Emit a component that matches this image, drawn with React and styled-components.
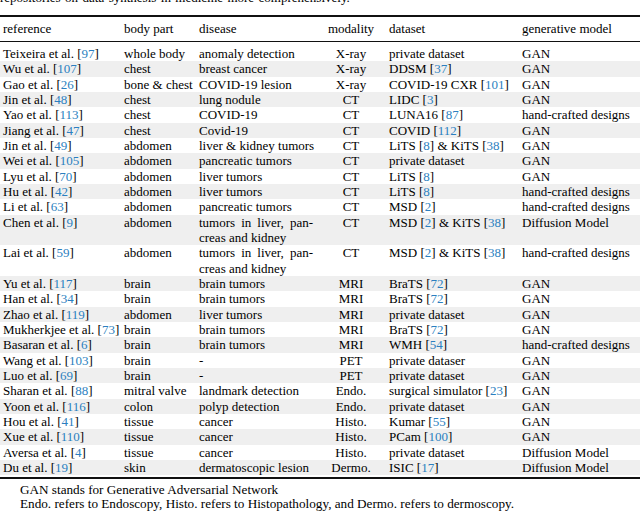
import React from "react";
import styled, { createGlobalStyle } from "styled-components";

const Global = createGlobalStyle`
  html, body { margin: 0; padding: 0; background: #fff; }
  body { font-family: "Liberation Serif", "Times New Roman", serif; color: #000; }
  #root { width: 640px; height: 514px; overflow: hidden; }
`;

const Page = styled.div`
  width: 640px;
  height: 514px;
  overflow: hidden;
  font-size: 13px;
`;

const Caption = styled.div`
  margin-top: -10px;
  height: 15px;
  line-height: 15px;
  word-spacing: 1.2px;
  white-space: nowrap;
`;

const Table = styled.div`
  margin-top: 10px;
  border-top: 2px solid #111;
  border-bottom: 2px solid #111;
  padding-bottom: 2px;
`;

const cols = "121px 75px 120px 70px 133px 1fr";

const Head = styled.div`
  display: grid;
  grid-template-columns: ${cols};
  height: 24px;
  line-height: 24px;
  border-bottom: 1px solid #111;
  margin-bottom: 4px;
`;

const Row = styled.div`
  display: grid;
  grid-template-columns: ${cols};
  line-height: 15.33px;
  background: ${(p) => (p.$shaded ? "#efefef" : "#fff")};
`;

const Cell = styled.div`
  padding: 0 3px;
  white-space: nowrap;
  text-align: ${(p) => (p.$center ? "center" : "left")};
`;

const Para = styled.div`
  white-space: normal;
`;

const JustLine = styled.div`
  text-align: justify;
  text-align-last: ${(p) => (p.$last ? "left" : "justify")};
`;

const Num = styled.span`
  color: #2b7fc0;
`;

const Notes = styled.div`
  margin-top: 4px;
  padding-left: 20px;
  font-size: 13.2px;
  line-height: 14px;
`;

function Cited({ text }) {
  const parts = text.split(/\[(\d+)\]/);
  return (
    <>
      {parts.map((p, i) =>
        i % 2 === 1 ? (
          <React.Fragment key={i}>
            [<Num>{p}</Num>]
          </React.Fragment>
        ) : (
          <React.Fragment key={i}>{p}</React.Fragment>
        )
      )}
    </>
  );
}

const multi = ["tumors in liver, pan-", "creas and kidney"];

const rows = [
  ["Teixeira et al. [97]", "whole body", "anomaly detection", "X-ray", "private dataset", "GAN"],
  ["Wu et al. [107]", "chest", "breast cancer", "X-ray", "DDSM [37]", "GAN"],
  ["Gao et al. [26]", "bone & chest", "COVID-19 lesion", "X-ray", "COVID-19 CXR [101]", "GAN"],
  ["Jin et al. [48]", "chest", "lung nodule", "CT", "LIDC [3]", "GAN"],
  ["Yao et al. [113]", "chest", "COVID-19", "CT", "LUNA16 [87]", "hand-crafted designs"],
  ["Jiang et al. [47]", "chest", "Covid-19", "CT", "COVID [112]", "GAN"],
  ["Jin et al. [49]", "abdomen", "liver & kidney tumors", "CT", "LiTS [8] & KiTS [38]", "GAN"],
  ["Wei et al. [105]", "abdomen", "pancreatic tumors", "CT", "private dataset", "GAN"],
  ["Lyu et al. [70]", "abdomen", "liver tumors", "CT", "LiTS [8]", "GAN"],
  ["Hu et al. [42]", "abdomen", "liver tumors", "CT", "LiTS [8]", "hand-crafted designs"],
  ["Li et al. [63]", "abdomen", "pancreatic tumors", "CT", "MSD [2]", "hand-crafted designs"],
  ["Chen et al. [9]", "abdomen", multi, "CT", "MSD [2] & KiTS [38]", "Diffusion Model"],
  ["Lai et al. [59]", "abdomen", multi, "CT", "MSD [2] & KiTS [38]", "hand-crafted designs"],
  ["Yu et al. [117]", "brain", "brain tumors", "MRI", "BraTS [72]", "GAN"],
  ["Han et al. [34]", "brain", "brain tumors", "MRI", "BraTS [72]", "GAN"],
  ["Zhao et al. [119]", "abdomen", "liver tumors", "MRI", "private dataset", "GAN"],
  ["Mukherkjee et al. [73]", "brain", "brain tumors", "MRI", "BraTS [72]", "GAN"],
  ["Basaran et al. [6]", "brain", "brain tumors", "MRI", "WMH [54]", "hand-crafted designs"],
  ["Wang et al. [103]", "brain", "-", "PET", "private dataser", "GAN"],
  ["Luo et al. [69]", "brain", "-", "PET", "private dataset", "GAN"],
  ["Sharan et al. [88]", "mitral valve", "landmark detection", "Endo.", "surgical simulator [23]", "GAN"],
  ["Yoon et al. [116]", "colon", "polyp detection", "Endo.", "private dataset", "GAN"],
  ["Hou et al. [41]", "tissue", "cancer", "Histo.", "Kumar [55]", "GAN"],
  ["Xue et al. [110]", "tissue", "cancer", "Histo.", "PCam [100]", "GAN"],
  ["Aversa et al. [4]", "tissue", "cancer", "Histo.", "private dataset", "Diffusion Model"],
  ["Du et al. [19]", "skin", "dermatoscopic lesion", "Dermo.", "ISIC [17]", "Diffusion Model"],
];

const headers = ["reference", "body part", "disease", "modality", "dataset", "generative model"];

export default function App() {
  return (
    <Page>
      <Global />
      <Caption>repositories on data synthesis in medicine more comprehensively.</Caption>
      <Table>
        <Head>
          {headers.map((h, i) => (
            <Cell key={h} $center={i === 3}>
              {h}
            </Cell>
          ))}
        </Head>
        {rows.map((r, ri) => (
          <Row key={ri} $shaded={ri % 2 === 1}>
            {r.map((c, ci) => (
              <Cell key={ci} $center={ci === 3}>
                {Array.isArray(c) ? (
                  <Para>
                    {c.map((line, li) => (
                      <JustLine key={li} $last={li === c.length - 1}>
                        {line}
                      </JustLine>
                    ))}
                  </Para>
                ) : (
                  <Cited text={c} />
                )}
              </Cell>
            ))}
          </Row>
        ))}
      </Table>
      <Notes>
        <div>GAN stands for Generative Adversarial Network</div>
        <div>Endo. refers to Endoscopy, Histo. refers to Histopathology, and Dermo. refers to dermoscopy.</div>
      </Notes>
    </Page>
  );
}
